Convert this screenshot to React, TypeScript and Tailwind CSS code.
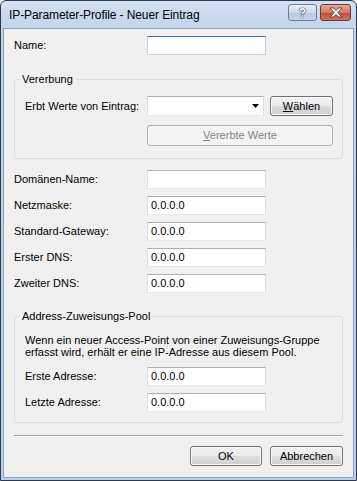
import React from "react";

function TextBox({ value = "", focused = false }: { value?: string; focused?: boolean }) {
  return (
    <div
      className={`w-[119px] h-[19px] bg-white border px-[3px] flex items-center ${
        focused
          ? "border-[#b5d3ea] border-t-[#3d7bad]"
          : "border-[#e3e9ef] border-t-[#abadb3] border-x-[#dbdfe6]"
      }`}
    >
      {value}
    </div>
  );
}

function Row({
  label,
  value,
  width = "w-[133px]",
  focused = false,
}: {
  label: string;
  value?: string;
  width?: string;
  focused?: boolean;
}) {
  return (
    <div className="flex items-center h-[19px]">
      <span className={width}>{label}</span>
      <TextBox value={value} focused={focused} />
    </div>
  );
}

const btn =
  "h-[20px] rounded-[3px] border border-[#707070] bg-[linear-gradient(#f2f2f2_0%,#ebebeb_48%,#dddddd_52%,#cfcfcf_100%)] shadow-[inset_0_0_0_1px_#fbfbfb] flex items-center justify-center text-black";

export default function App() {
  return (
    <div className="w-[357px] h-[481px] bg-white font-['Liberation_Sans',Arial,sans-serif] text-[11px] text-black">
      <div className="w-full h-full flex flex-col border border-[#2b3a4f] rounded-t-[6px] bg-[linear-gradient(#d3e1f2,#bfd3ea_30px,#bcd1ea)] px-[2px] pb-[2px]">
        {/* title bar */}
        <div className="h-[27px] flex items-center pl-[6px] pr-[3px]">
          <span className="text-[12px] tracking-[-0.1px] grow">IP-Parameter-Profile - Neuer Eintrag</span>
          <div className="flex gap-[3px] mt-[-4px]">
            <div className="w-[29px] h-[17px] rounded-[3px] border border-[#6b7d95] bg-[linear-gradient(#e6eef8,#cbdaec_50%,#b5c8e0_51%,#c3d5ea)] flex items-center justify-center">
              <span className="text-white font-bold text-[12px] leading-none [text-shadow:0_0_1px_#334,0_0_1px_#334,0_0_1px_#334]">?</span>
            </div>
            <div className="w-[31px] h-[17px] rounded-[3px] border border-[#6e3a33] bg-[linear-gradient(#e8a797,#d47561_50%,#c14c35_51%,#d0735a)] flex items-center justify-center">
              <svg width="14" height="11" viewBox="0 0 14 11">
                <path
                  d="M1 1h3.5l2.5 2.6L9.5 1H13L8.8 5.5 13 10H9.5L7 7.4 4.5 10H1l4.2-4.5z"
                  fill="#fff"
                  stroke="#4a2a25"
                  strokeWidth="0.8"
                />
              </svg>
            </div>
          </div>
        </div>

        {/* content */}
        <div className="grow bg-[#f0f0f0] border border-[#8da1bc] px-[10px] pt-[7px] flex flex-col">
          <Row label="Name:" focused />

          <fieldset className="mt-[18px] border border-[#d5dfe5] rounded-[3px]">
            <legend className="ml-[5px] px-[2px] leading-[13px]">Vererbung</legend>
            <div className="pl-[10px] pr-[9px] pt-[10px] pb-[12px] flex flex-col">
              <div className="flex items-center h-[20px]">
                <span className="w-[122px]">Erbt Werte von Eintrag:</span>
                <div className="w-[117px] h-[20px] bg-white border border-[#e3e9ef] border-t-[#abadb3] border-x-[#dbdfe6] flex items-center justify-end pr-[4px]">
                  <svg width="7" height="4" viewBox="0 0 7 4">
                    <path d="M0 0h7L3.5 4z" fill="#000" />
                  </svg>
                </div>
                <div className={`${btn} ml-[6px] w-[63px] h-[19px]`}>
                  <span>
                    <u className="underline-offset-[1px]">W</u>ählen
                  </span>
                </div>
              </div>
              <div className="flex mt-[9px]">
                <div className="w-[122px]" />
                <div className="w-[186px] h-[21px] rounded-[3px] border border-[#adb2b5] bg-[#f4f4f4] flex items-center justify-center text-[#838383]">
                  <span>
                    <u className="underline-offset-[1px]">V</u>ererbte Werte
                  </span>
                </div>
              </div>
            </div>
          </fieldset>

          <div className="mt-[11px] flex flex-col gap-[7px]">
            <Row label="Domänen-Name:" />
            <Row label="Netzmaske:" value="0.0.0.0" />
            <Row label="Standard-Gateway:" value="0.0.0.0" />
            <Row label="Erster DNS:" value="0.0.0.0" />
            <Row label="Zweiter DNS:" value="0.0.0.0" />
          </div>

          <fieldset className="mt-[17px] border border-[#d5dfe5] rounded-[3px]">
            <legend className="ml-[5px] px-[2px] leading-[13px]">Address-Zuweisungs-Pool</legend>
            <div className="pl-[10px] pr-[9px] pt-[11px] pb-[10px] flex flex-col">
              <p className="leading-[12px]">
                Wenn ein neuer Access-Point von einer Zuweisungs-Gruppe
                <br />
                erfasst wird, erhält er eine IP-Adresse aus diesem Pool.
              </p>
              <div className="mt-[9px] flex flex-col gap-[7px]">
                <Row label="Erste Adresse:" value="0.0.0.0" width="w-[122px]" />
                <Row label="Letzte Adresse:" value="0.0.0.0" width="w-[122px]" />
              </div>
            </div>
          </fieldset>

          <div className="mt-[12px] border-t border-[#a0a0a0] border-b border-b-white" />

          <div className="mt-[9px] flex justify-end gap-[8px]">
            <div className={`${btn} w-[72px] border-[#3c7fb1] shadow-[inset_0_0_0_1px_#8fd8f8]`}>OK</div>
            <div className={`${btn} w-[73px]`}>Abbrechen</div>
          </div>
        </div>
      </div>
    </div>
  );
}
